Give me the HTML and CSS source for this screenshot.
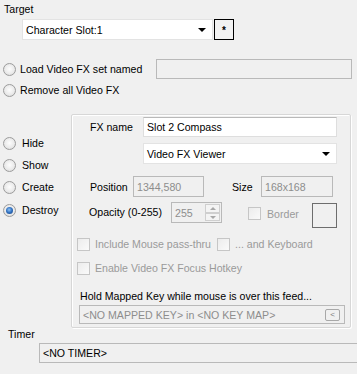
FILE: index.html
```html
<!DOCTYPE html>
<html lang="en">
<head>
    <meta charset="UTF-8">
    <title>Video FX Action</title>
    <link rel="stylesheet" href="styles.css">
</head>
<body>
    <div class="form">
        <div class="caption target-caption">Target</div>
        <div class="target-row">
            <div class="combo target-combo"><span class="combo-text">Character Slot:1</span><span class="arrow"></span></div>
            <div class="star-btn">*</div>
        </div>

        <div class="option-row load-row">
            <span class="radio"></span>
            <span class="option-text">Load Video FX set named</span>
            <div class="textbox disabled set-name"></div>
        </div>
        <div class="option-row remove-row">
            <span class="radio"></span>
            <span class="option-text">Remove all Video FX</span>
        </div>

        <div class="main">
            <div class="modes">
                <div class="option-row mode"><span class="radio"></span><span class="option-text">Hide</span></div>
                <div class="option-row mode"><span class="radio"></span><span class="option-text">Show</span></div>
                <div class="option-row mode"><span class="radio"></span><span class="option-text">Create</span></div>
                <div class="option-row mode"><span class="radio checked"></span><span class="option-text">Destroy</span></div>
            </div>

            <div class="panel">
                <div class="row fx-row">
                    <span class="lbl fx-lbl">FX name</span>
                    <div class="textbox fx-name">Slot 2 Compass</div>
                </div>
                <div class="row viewer-row">
                    <div class="combo viewer-combo"><span class="combo-text">Video FX Viewer</span><span class="arrow"></span></div>
                </div>
                <div class="row pos-row">
                    <span class="lbl pos-lbl">Position</span>
                    <div class="textbox disabled pos-box">1344,580</div>
                    <span class="lbl size-lbl">Size</span>
                    <div class="textbox disabled size-box">168x168</div>
                </div>
                <div class="row opacity-row">
                    <span class="lbl opacity-lbl">Opacity (0-255)</span>
                    <div class="textbox disabled spin">
                        <span>255</span>
                        <div class="spin-btns">
                            <span class="spin-btn up"></span>
                            <span class="spin-btn down"></span>
                        </div>
                    </div>
                    <span class="check border-check"></span>
                    <span class="grey-text">Border</span>
                    <div class="color-box"></div>
                </div>
                <div class="row check-row include-row">
                    <span class="check"></span>
                    <span class="grey-text include-text">Include Mouse pass-thru</span>
                    <span class="check"></span>
                    <span class="grey-text">... and Keyboard</span>
                </div>
                <div class="row check-row hotkey-row">
                    <span class="check"></span>
                    <span class="grey-text">Enable Video FX Focus Hotkey</span>
                </div>
                <div class="hold-lbl">Hold Mapped Key while mouse is over this feed...</div>
                <div class="textbox disabled key-box">
                    <span>&lt;NO MAPPED KEY&gt; in &lt;NO KEY MAP&gt;</span>
                    <span class="key-btn">&lt;</span>
                </div>
            </div>
        </div>

        <div class="caption timer-caption">Timer</div>
        <div class="textbox timer-box">&lt;NO TIMER&gt;</div>
    </div>
</body>
</html>
```

FILE: styles.css
```css
html, body {
    margin: 0;
    background: #f0f0f0;
    overflow: hidden;
}
body {
    width: 357px;
    height: 374px;
    font-family: 'Liberation Sans', Arial, sans-serif;
    font-size: 10.6px;
    color: #000;
}
.form {
    display: flex;
    flex-direction: column;
}
.caption {
    line-height: 13px;
    height: 13px;
}
.target-caption {
    margin: 3px 0 0 4px;
}
.target-row {
    display: flex;
    margin: 3px 0 0 22px;
    height: 21px;
}
.combo {
    box-sizing: border-box;
    height: 21px;
    background: #fff;
    border: 1px solid #e3e3e3;
    display: flex;
    align-items: center;
    padding: 0 6px 0 3px;
}
.combo-text {
    flex: 1;
}
.arrow {
    width: 0;
    height: 0;
    border-left: 4px solid transparent;
    border-right: 4px solid transparent;
    border-top: 4px solid #000;
}
.target-combo {
    width: 191px;
}
.star-btn {
    box-sizing: border-box;
    width: 20px;
    height: 21px;
    margin-left: 1px;
    border: 1px solid #000;
    background: #f2f2f2;
    text-align: center;
    line-height: 22px;
    font-size: 10px;
    font-weight: bold;
}
.option-row {
    display: flex;
    align-items: center;
    height: 20px;
}
.radio {
    box-sizing: border-box;
    width: 13px;
    height: 13px;
    margin-left: 3px;
    border-radius: 50%;
    border: 1px solid #9c9c9c;
    background: radial-gradient(circle at 50% 45%, #fdfdfd 0%, #ebebeb 55%, #d4d4d4 100%);
    position: relative;
}
.radio.checked::after {
    content: '';
    position: absolute;
    left: 2px;
    top: 2px;
    width: 7px;
    height: 7px;
    border-radius: 50%;
    background: radial-gradient(circle at 45% 40%, #8fc3f5 0%, #2f6fbf 50%, #173f78 100%);
}
.option-text {
    margin-left: 4px;
}
.load-row {
    margin-top: 19px;
}
.set-name {
    margin-left: auto;
    margin-right: 5px;
    width: 196px;
}
.remove-row {
    margin-top: 1px;
}
.textbox {
    box-sizing: border-box;
    height: 20px;
    background: #fff;
    border: 1px solid #dedede;
    border-top-color: #b9b9b9;
    padding: 0 3px;
    display: flex;
    align-items: center;
}
.textbox.disabled {
    background: #f0f0f0;
    border-color: #b9b9b9;
    color: #8d8d8d;
}
.main {
    display: flex;
    margin-top: 14px;
}
.modes {
    width: 71px;
    display: flex;
    flex-direction: column;
    padding-top: 18px;
}
.mode {
    height: 22px;
}
.mode:last-child {
    margin-top: 1px;
}
.mode .option-text {
    margin-left: 6px;
}
.panel {
    box-sizing: border-box;
    width: 280px;
    height: 214px;
    border: 1px solid #d7d7d7;
    box-shadow: inset 1px 1px 0 #fff, 1px 1px 0 #fff;
    border-radius: 2px;
    display: flex;
    flex-direction: column;
    padding-left: 18px;
}
.row {
    display: flex;
    align-items: center;
}
.fx-row {
    margin-top: 2px;
    height: 20px;
}
.fx-lbl {
    width: 53px;
}
.fx-name {
    width: 194px;
}
.viewer-row {
    margin: 6px 0 0 53px;
}
.viewer-combo {
    width: 194px;
}
.pos-row {
    margin-top: 12px;
    height: 21px;
}
.pos-lbl {
    width: 43px;
}
.pos-box, .size-box {
    height: 21px;
    width: 71px;
}
.size-lbl {
    margin-left: 28px;
    width: 29px;
}
.size-box {
    width: 72px;
}
.opacity-row {
    margin-top: 5px;
    height: 25px;
    align-items: flex-start;
}
.opacity-lbl {
    line-height: 21px;
    width: 82px;
    margin-left: -1px;
}
.spin {
    width: 51px;
    height: 21px;
    justify-content: space-between;
    padding-right: 1px;
}
.spin-btns {
    display: flex;
    flex-direction: column;
    width: 15px;
    height: 17px;
}
.spin-btn {
    box-sizing: border-box;
    flex: 1;
    border: 1px solid #cfcfcf;
    background: #f4f4f4;
    position: relative;
}
.spin-btn::after {
    content: '';
    position: absolute;
    left: 4px;
    width: 0;
    height: 0;
    border-left: 3px solid transparent;
    border-right: 3px solid transparent;
}
.spin-btn.up::after {
    top: 2px;
    border-bottom: 3px solid #a8a8a8;
}
.spin-btn.down::after {
    top: 2px;
    border-top: 3px solid #a8a8a8;
}
.check {
    box-sizing: border-box;
    width: 13px;
    height: 13px;
    border: 1px solid #c6c6c6;
    background: linear-gradient(135deg, #ececec, #fafafa);
}
.grey-text {
    color: #9a9a9a;
    margin-left: 6px;
}
.border-check {
    margin: 5px 0 0 26px;
}
.opacity-row .grey-text {
    line-height: 21px;
    margin-top: 2px;
}
.color-box {
    box-sizing: border-box;
    width: 25px;
    height: 25px;
    margin: 1px 0 0 auto;
    margin-right: 13px;
    border: 1px solid #6d6d6d;
}
.check-row {
    height: 20px;
    margin-left: -13px;
}
.include-row {
    margin-top: 7px;
}
.check-row .grey-text {
    margin-left: 5px;
}
.include-text {
    width: 122px;
}
.hotkey-row {
    margin-top: 4px;
}
.hold-lbl {
    margin: 10px 0 0 -10px;
    line-height: 16px;
}
.key-box {
    margin: 1px 0 0 -11px;
    width: 266px;
    height: 19px;
    justify-content: space-between;
    padding: 0 4px 0 3px;
}
.key-btn {
    box-sizing: border-box;
    width: 15px;
    height: 12px;
    border: 1px solid #a8a8a8;
    border-radius: 2px;
    font-size: 8px;
    line-height: 10px;
    text-align: center;
    color: #7a7a7a;
}
.timer-caption {
    margin: 0 0 0 8px;
}
.timer-box {
    margin: 2px 0 0 39px;
    width: 330px;
    background: #f0f0f0;
    border-color: #b9b9b9;
}
```
